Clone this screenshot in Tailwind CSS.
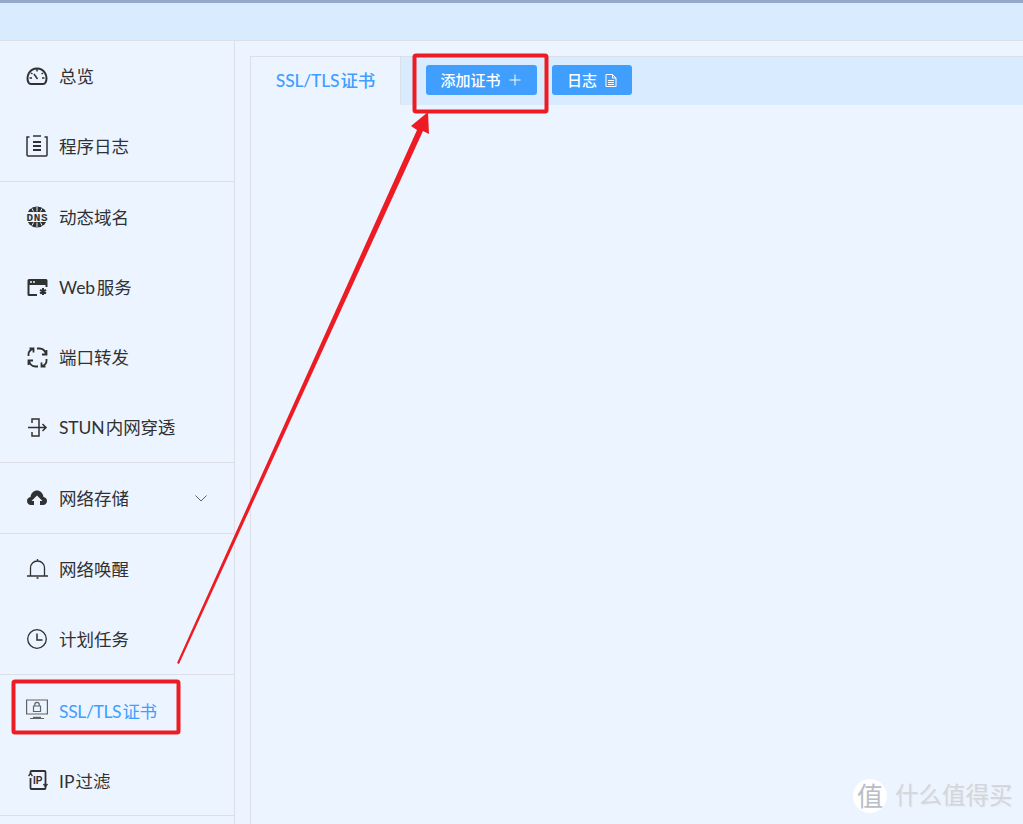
<!DOCTYPE html>
<html lang="zh-CN">
<head>
  <meta charset="UTF-8" />
  <title>SSL/TLS 证书</title>
  <script src="https://cdn.jsdelivr.net/npm/@tailwindcss/browser@4"></script>
</head>
<body class="relative h-[824px] w-[1023px] overflow-hidden bg-[#ecf5ff] text-[17.5px] text-[#303133] [word-spacing:-3px] font-['Lato','Noto_Sans_CJK_SC',sans-serif]">
  <!-- top bar -->
  <header class="h-[41px] border-t-[3px] border-b border-t-[#94a9c9] border-b-[#dcdfe6] bg-[#d9ecff]"></header>

  <div class="flex h-[783px]">
    <!-- side menu -->
    <aside class="w-[235px] shrink-0 border-r border-[#dcdfe6] leading-[27px]">
      <div class="border-b border-[#dcdfe6]">
        <div class="flex h-[70px] items-center">
          <svg class="ml-[26px] h-[22px] w-[22px]" viewBox="0 0 22 22" fill="none" stroke="#303133" stroke-width="2"><path d="M5 19h12c1.500 0 2-.5 2.500-1.500C22.500 11 18 3.500 11 3.500S-.5 11 2.500 17.500C3 18.500 3.500 19 5 19z"/><path d="M11 4v2.500M5 8l1.500 1M17 8l-1.500 1M3.500 13H6M16 13h2.500M8 9l3.500 5" stroke-width="1.500"/></svg>
          <span class="ml-[11px]">总览</span>
        </div>
        <div class="flex h-[70px] items-center">
          <svg class="ml-[26px] h-[22px] w-[22px]" viewBox="0 0 22 22" fill="none" stroke="#303133" stroke-width="1.500"><path d="M3.500 2H1v18a1 1 0 0 0 1 1h18a1 1 0 0 0 1-1V2h-2.500M7 1h8"/><path d="M7 7h8M7 11h8M7 15h8" stroke-width="2"/></svg>
          <span class="ml-[11px]">程序日志</span>
        </div>
      </div>
      <div class="border-b border-[#dcdfe6]">
        <div class="flex h-[70px] items-center">
          <svg class="ml-[26px] h-[22px] w-[22px]" viewBox="0 0 22 22"><circle cx="11" cy="11" r="10.500" fill="#303133"/><rect x="0" y="6" width="22" height="10" fill="#ecf5ff"/><text x="0.500" y="14.800" textLength="21" lengthAdjust="spacing" fill="#303133" font-size="11" font-weight="700" font-family="Liberation Mono">DNS</text><path d="M11 1v4.500M6 2.500l1.500 3M16 2.500 14.500 5.500M11 16.500V21M6 19.500 7.500 16.500M16 19.500 14.500 16.500" stroke="#ecf5ff" stroke-width="1"/></svg>
          <span class="ml-[11px]">动态域名</span>
        </div>
        <div class="flex h-[70px] items-center">
          <svg class="ml-[27px] h-[21px] w-[21px]" viewBox="0 0 21 21"><path d="M2 2h17a1.500 1.500 0 0 1 1.500 1.500V10h-2V8H2.500v9H10v2H2A1.500 1.500 0 0 1 .500 17.500v-14A1.500 1.500 0 0 1 2 2z" fill="#303133"/><circle cx="4" cy="5" r="1" fill="#ecf5ff"/><circle cx="7" cy="5" r="1" fill="#ecf5ff"/><path d="M16 11v7M13 12.800l6 3.500M19 12.800l-6 3.500" stroke="#303133" stroke-width="2"/></svg>
          <span class="ml-[11px]">Web 服务</span>
        </div>
        <div class="flex h-[70px] items-center">
          <svg class="ml-[27px] h-[21px] w-[21px]" viewBox="0 0 21 21" fill="none" stroke="#303133" stroke-width="1.800"><path d="M1.500 9V7C1.500 5 3 3 6 1.800M2.500 1.500H6.500V5.500"/><path d="M10 1.500h2.500C16 1.500 18 3.500 19 7M19.500 3v4.500H15"/><path d="M19.500 12v2c0 2-1.500 4-4.500 5M18.500 19.500H14.500V15.500"/><path d="M11 19.500H8.500C5 19.500 3 17.500 2 14M1.500 18v-4.500H6"/></svg>
          <span class="ml-[11px]">端口转发</span>
        </div>
        <div class="flex h-[70px] items-center">
          <svg class="ml-[27px] h-[21px] w-[21px]" viewBox="0 0 21 21" fill="none" stroke="#303133" stroke-width="1.500"><path d="M5 6V2h7v17H5v-4M1 10.500h18M15.500 7l3.500 3.500-3.500 3.500"/></svg>
          <span class="ml-[11px] tracking-[-0.15px]">STUN 内网穿透</span>
        </div>
      </div>
      <div class="border-b border-[#dcdfe6]">
        <div class="flex h-[70px] items-center">
          <svg class="ml-[27px] h-[20px] w-[20px]" viewBox="0 0 20 20"><path d="M4 17c-2.500 0-4-1.800-4-4s1.500-3.800 3.500-4C4 5 6.800 2.500 10 2.500S16 5 16.500 9c2 .2 3.500 1.800 3.500 4s-1.500 4-4 4h-3v-4h2.500L10 7.500 4.500 13H7v4z" fill="#303133"/></svg>
          <span class="ml-[12px]">网络存储</span>
          <svg class="ml-auto mr-[26px] h-[14px] w-[14px]" viewBox="0 0 14 14" fill="none" stroke="#606266" stroke-width="1"><path d="M1.500 4.500 7 10l5.500-5.500"/></svg>
        </div>
      </div>
      <div class="border-b border-[#dcdfe6]">
        <div class="flex h-[70px] items-center">
          <svg class="ml-[27px] h-[22px] w-[21px]" viewBox="0 0 21 22" fill="none" stroke="#303133" stroke-width="1.300"><path d="M0 18h21M3.500 18v-8c0-4 3-7 7-7s7 3 7 7v8M10.500 3V1M9.500 20h2"/></svg>
          <span class="ml-[11px]">网络唤醒</span>
        </div>
        <div class="flex h-[70px] items-center">
          <svg class="ml-[27px] h-[20px] w-[20px]" viewBox="0 0 20 20" fill="none" stroke="#303133" stroke-width="1.300"><circle cx="10" cy="10" r="9.300"/><path d="M10 4.500V11h5.500" stroke-width="1.500"/></svg>
          <span class="ml-[12px]">计划任务</span>
        </div>
      </div>
      <div class="border-b border-[#dcdfe6]">
        <div class="flex h-[70px] items-center">
          <svg class="ml-[26px] h-[22px] w-[22px]" viewBox="0 0 22 22" fill="none" stroke="#606266" stroke-width="1.200"><path d="M.6 1h20.800v14H.6z"/><path d="M7 18.500h8" stroke-width="1.500"/><path d="M4 19.500h14" stroke-width="1"/><path d="M7.500 7h7v5.500h-7zM8.800 7V5.500a2.200 2.200 0 0 1 4.400 0V7"/></svg>
          <span class="ml-[11px] mt-[2px] tracking-[-0.35px] text-[#409eff]">SSL/TLS 证书</span>
        </div>
        <div class="flex h-[70px] items-center">
          <svg class="ml-[28px] h-[20px] w-[20px]" viewBox="0 0 20 20" fill="none" stroke="#303133" stroke-width="1.800"><path d="M2.500 4V2a1 1 0 0 1 1-1h13a1 1 0 0 1 1 1v16a1 1 0 0 1-1 1h-13a1 1 0 0 1-1-1V8"/><path d="M.5 6 2.500 3.500 4.500 6M15.500 14l2 2.500 2-2.500" stroke-width="1.400"/><text x="5" y="14" fill="#303133" stroke="none" font-size="10" font-weight="700" font-family="Liberation Sans">IP</text></svg>
          <span class="ml-[11px] mt-[2px]">IP 过滤</span>
        </div>
      </div>
    </aside>

    <!-- main panel -->
    <main class="flex-1 pl-[15px] pt-[15px]">
      <div class="h-full border-l border-t border-[#dcdfe6]">
        <div class="flex h-[48px] bg-[#d9ecff]">
          <div class="flex h-[48px] w-[150px] items-center justify-center border-r border-[#dcdfe6] bg-[#ecf5ff] font-medium tracking-[-0.2px] text-[#409eff]">SSL/TLS 证书</div>
          <div class="ml-[25px] mt-[8px] flex gap-[15px]">
            <button class="flex h-[30px] w-[111px] items-center justify-center gap-[8px] rounded-[3px] bg-[#409eff] pr-[2px] text-[15px] font-medium text-white">
              添加证书
              <svg class="h-[12px] w-[12px]" viewBox="0 0 12 12" stroke="white" stroke-width="1"><path d="M6 .5v11M.5 6h11"/></svg>
            </button>
            <button class="flex h-[30px] w-[80px] items-center justify-center gap-[8px] rounded-[3px] bg-[#409eff] text-[15px] font-medium text-white">
              日志
              <svg class="h-[13px] w-[12px]" viewBox="0 0 12 13" fill="none" stroke="white" stroke-width="1"><path d="M1 .5h6.500l3.500 3.500v8.500H1zM7.500 .5V4H11M3 6.500h6M3 8.500h6M3 10.500h6"/></svg>
            </button>
          </div>
        </div>
      </div>
    </main>
  </div>

  <!-- annotations drawn over the screenshot -->
  <svg class="absolute left-0 top-0 h-[824px] w-[1023px]" viewBox="0 0 1023 824" fill="none">
    <rect x="13.500" y="681.500" width="165" height="51" rx="1.500" stroke="#ed1c24" stroke-width="4"/>
    <rect x="414.500" y="55.500" width="132" height="56" rx="1.500" stroke="#ed1c24" stroke-width="4"/>
    <path d="M177 663 417 130 411 126 428 112 429 134 423 131 179 664z" fill="#ed1c24"/>
  </svg>

  <!-- watermark -->
  <div class="absolute left-[853px] top-[779px] flex items-center">
    <div class="flex h-[34px] w-[34px] items-center justify-center rounded-full bg-white text-[26px] leading-none text-[#b9bdc4]">值</div>
    <span class="ml-[8px] text-[23.500px] leading-none text-[#d2d6dc] [text-shadow:1px_1px_1px_#e6e8ec]">什么值得买</span>
  </div>
</body>
</html>
